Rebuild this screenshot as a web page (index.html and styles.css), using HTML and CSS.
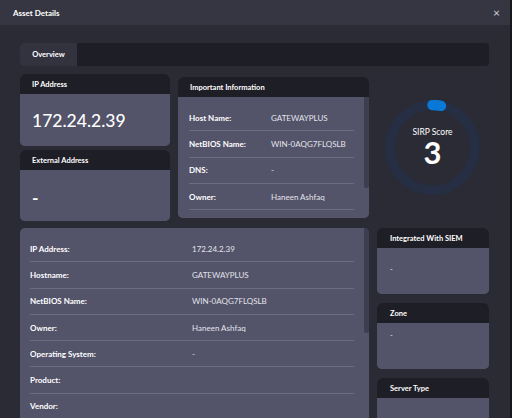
FILE: index.html
```html
<!DOCTYPE html>
<html lang="en">
<head>
  <meta charset="UTF-8">
  <meta name="viewport" content="width=device-width, initial-scale=1.0">
  <title>Asset Details</title>
  <link rel="stylesheet" href="styles.css">
</head>
<body>
  <div class="modal">
    <div class="modal-header">
      <h1>Asset Details</h1>
      <span class="close-btn">&#215;</span>
    </div>

    <div class="modal-body">
      <div class="tabs">
        <div class="tab active">Overview</div>
      </div>

      <div class="overview-grid">
        <div class="address-stack">
          <div class="card">
            <div class="card-header">IP Address</div>
            <div class="card-body big-value">172.24.2.39</div>
          </div>
          <div class="card">
            <div class="card-header">External Address</div>
            <div class="card-body big-value dash-value">-</div>
          </div>
        </div>

        <div class="card important-card">
          <div class="card-header">Important Information</div>
          <div class="card-body rows-body">
            <div class="info-row"><span class="label">Host Name:</span><span class="value">GATEWAYPLUS</span></div>
            <div class="info-row"><span class="label">NetBIOS Name:</span><span class="value">WIN-0AQG7FLQSLB</span></div>
            <div class="info-row"><span class="label">DNS:</span><span class="value">-</span></div>
            <div class="info-row"><span class="label">Owner:</span><span class="value">Haneen Ashfaq</span></div>
          </div>
          <div class="scroll-thumb important-thumb"></div>
        </div>

        <div class="score-box">
          <div class="score-ring">
            <svg width="95" height="95" viewBox="0 0 95 95">
              <circle cx="47.5" cy="47.5" r="42.5" fill="none" stroke="#252e42" stroke-width="9.5"/>
              <circle cx="47.5" cy="47.5" r="42.5" fill="none" stroke="#0a78d7" stroke-width="10.5"
                      stroke-linecap="round" stroke-dasharray="8.5 300" transform="rotate(-90 47.5 47.5)"/>
            </svg>
            <div class="score-text">
              <span class="score-label">SIRP Score</span>
              <span class="score-value">3</span>
            </div>
          </div>
        </div>

        <div class="card details-card">
          <div class="card-body rows-body details-body">
            <div class="info-row"><span class="label">IP Address:</span><span class="value">172.24.2.39</span></div>
            <div class="info-row"><span class="label">Hostname:</span><span class="value">GATEWAYPLUS</span></div>
            <div class="info-row"><span class="label">NetBIOS Name:</span><span class="value">WIN-0AQG7FLQSLB</span></div>
            <div class="info-row"><span class="label">Owner:</span><span class="value">Haneen Ashfaq</span></div>
            <div class="info-row"><span class="label">Operating System:</span><span class="value">-</span></div>
            <div class="info-row"><span class="label">Product:</span><span class="value"></span></div>
            <div class="info-row"><span class="label">Vendor:</span><span class="value"></span></div>
          </div>
          <div class="scroll-thumb details-thumb"></div>
        </div>

        <div class="side-stack">
          <div class="card side-card">
            <div class="card-header">Integrated With SIEM</div>
            <div class="card-body small-value siem-value">-</div>
          </div>
          <div class="card side-card">
            <div class="card-header">Zone</div>
            <div class="card-body small-value">-</div>
          </div>
          <div class="card side-card">
            <div class="card-header">Server Type</div>
            <div class="card-body small-value"></div>
          </div>
        </div>
      </div>
    </div>
  </div>
</body>
</html>
```

FILE: styles.css
```css
* {
  margin: 0;
  padding: 0;
  box-sizing: border-box;
  font-family: Lato, 'Open Sans', sans-serif;
}

html, body {
  height: 418px;
  overflow: hidden;
}

body {
  background-color: #16161d;
  color: #ffffff;
}

.modal {
  width: 510px;
  height: 418px;
  background-color: #2b2b36;
  overflow: hidden;
}

.modal-header {
  height: 25px;
  display: flex;
  justify-content: space-between;
  align-items: center;
  padding: 0 13px;
  background-color: #363642;
}

.modal-header h1 {
  font-size: 8px;
  font-weight: 700;
  color: #ffffff;
}

.close-btn {
  font-size: 12px;
  color: #d0d0d8;
  line-height: 1;
  margin-right: -3px;
}

.modal-body {
  padding: 18px 21px 0 20px;
}

.tabs {
  display: flex;
  height: 23px;
  background-color: #1e1e27;
  border-radius: 4px;
  overflow: hidden;
}

.tab {
  width: 57px;
  display: flex;
  align-items: center;
  justify-content: center;
  font-size: 7.5px;
  font-weight: 700;
  color: #ffffff;
}

.tab.active {
  background-color: #33333f;
}

.overview-grid {
  display: grid;
  grid-template-columns: 150px 191px 112px;
  column-gap: 8px;
  row-gap: 7px;
  margin-top: 8px;
}

.card {
  position: relative;
  border-radius: 5px;
  overflow: hidden;
  background-color: #535369;
  display: flex;
  flex-direction: column;
}

.card-header {
  height: 20px;
  display: flex;
  align-items: center;
  padding-left: 12px;
  background-color: #1e1e26;
  font-size: 7.5px;
  font-weight: 700;
  color: #ffffff;
  flex-shrink: 0;
}

.card-body {
  flex: 1;
  background-color: #535369;
}

.address-stack {
  display: flex;
  flex-direction: column;
  gap: 4px;
}

.address-stack .card:first-child {
  height: 72px;
}

.address-stack .card:last-child {
  height: 71px;
}

.big-value {
  display: flex;
  align-items: center;
  padding-left: 12px;
  font-size: 17.5px;
  font-weight: 500;
  color: #ffffff;
}

.dash-value {
  font-weight: 700;
  padding-top: 3px;
}

.important-card {
  margin-top: 3px;
  height: 141px;
}

.rows-body {
  padding: 8px 15px 0 11px;
}

.scroll-thumb {
  position: absolute;
  right: 0;
  width: 5px;
  background-color: #3e3e51;
  border-radius: 0 0 3px 3px;
}

.important-thumb {
  top: 20px;
  height: 91px;
}

.details-thumb {
  top: 0;
  height: 105px;
}

.info-row {
  display: flex;
  align-items: center;
  height: 26.3px;
  border-bottom: 1px solid #6c6c83;
  font-size: 8px;
}

.info-row .label {
  width: 82px;
  flex-shrink: 0;
  font-weight: 700;
  color: #ffffff;
}

.info-row .value {
  color: #e4e4ec;
}

.score-box {
  display: flex;
  align-items: center;
  justify-content: center;
}

.score-ring {
  position: relative;
  width: 95px;
  height: 95px;
  margin-left: -1px;
}

.score-ring svg {
  display: block;
}

.score-text {
  position: absolute;
  inset: 0;
  display: flex;
  flex-direction: column;
  align-items: center;
  justify-content: center;
  padding-bottom: 1px;
}

.score-label {
  font-size: 8.5px;
  line-height: 10px;
  color: #ffffff;
}

.score-value {
  font-size: 31px;
  font-weight: 700;
  line-height: 31px;
  color: #ffffff;
}

.details-card {
  grid-column: 1 / 3;
  height: 200px;
}

.details-body {
  padding: 8px 15px 0 10px;
}

.details-body .info-row .label {
  width: 162px;
}

.side-stack {
  display: flex;
  flex-direction: column;
  gap: 9px;
}

.side-card {
  height: 66px;
}

.side-card .card-header {
  padding-left: 13px;
}

.small-value {
  padding: 8px 13px 0;
  font-size: 7.5px;
  color: #e4e4ec;
}

.siem-value {
  padding-top: 17px;
}
```
